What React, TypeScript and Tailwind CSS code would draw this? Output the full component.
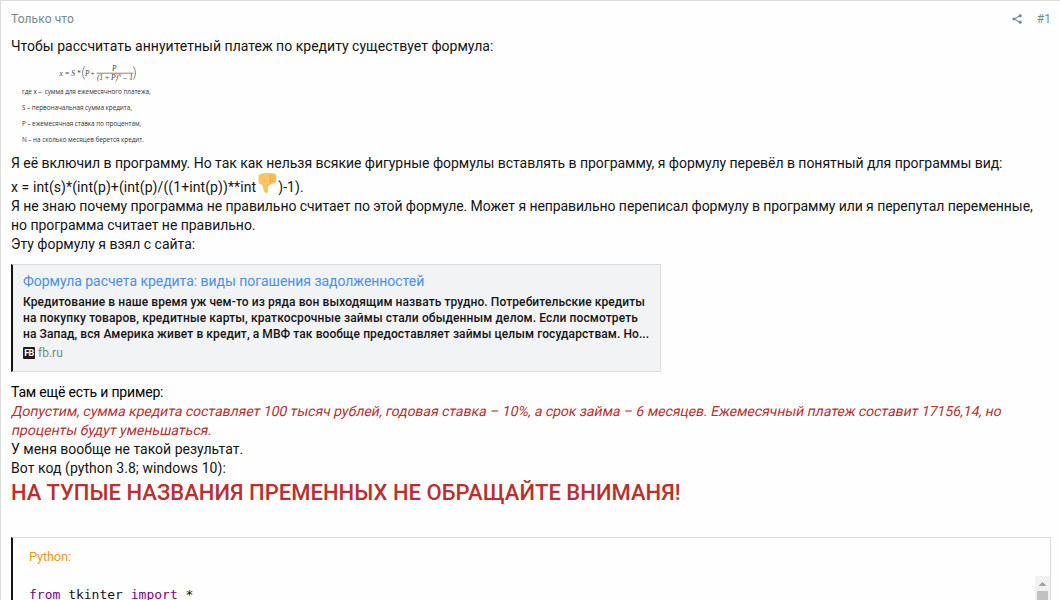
const formulaNotes = [
    "где x –  сумма для ежемесячного платежа,",
    "S – первоначальная сумма кредита,",
    "P – ежемесячная ставка по процентам,",
    "N – на сколько месяцев берется кредит.",
];

function ShareIcon() {
    return (
        <svg width="10" height="10" viewBox="0 0 10 10" fill="#74898b" stroke="#74898b" className="-mt-px mr-px">
            <path d="M8 1.7 2 5l6 3.3" fill="none" strokeWidth="1.1" />
            <circle cx="8.2" cy="1.8" r="1.2" strokeWidth="0.7" />
            <circle cx="1.7" cy="5" r="1.1" strokeWidth="0.7" />
            <circle cx="8.2" cy="8.2" r="1.2" strokeWidth="0.7" />
        </svg>
    );
}

function ThumbsDown() {
    return (
        <svg width="22" height="22" viewBox="0 0 22 22" className="inline-block align-[-2px]">
            <path
                d="M2.6 3.6 4.5 1.7 9.8 1l5.6.3 3.4.2q1.8.6 1.1 2.4 1.1 1 .2 2.6.8 1.2-.2 2.5.2 1.8-1.5 2.2l-3.8 1q-.9 1.6-2.5 2-.5 1.8.1 4.2.1 2.8-2.1 2.6-2-.1-2.5-2.9Q7 14.2 5.6 12.8l-2.4-1Q2.2 7.6 2.6 3.6Z"
                fill="#fac463"
            />
            <path d="m14.8 3.9 4.7.3M14.7 6.7l5 .1M14.5 9.4l4.7-.1M14.4 2v8.7l-2.2 3" fill="none" stroke="#e8a443" strokeWidth="0.7" />
        </svg>
    );
}

function Formula() {
    return (
        <div className="h-[98px] w-[155px] pt-[7px] pl-[11px] text-[#333]">
            <svg width="130" height="21" viewBox="0 0 130 21" fill="#444" className="block font-['Liberation_Serif',serif] text-[7.5px] italic">
                <text x="37.5" y="12.5" textLength="21">x = S *</text>
                <path d="M62.5 3.5q-4 6.5 0 13M111.5 3.5q4 6.5 0 13M74.5 10.2h37" fill="none" stroke="#555" strokeWidth="0.7" />
                <text x="63" y="12.5" textLength="10">P +</text>
                <text x="90" y="8">P</text>
                <text x="75" y="17.2" textLength="21">(1 + P)</text>
                <text x="96" y="14" className="text-[5px]">N</text>
                <text x="101" y="17.2" textLength="10">– 1</text>
            </svg>
            <div className="font-['Open_Sans',sans-serif] text-[6.4px] leading-4 tracking-[-0.06px] whitespace-pre">
                {formulaNotes.map((note) => (
                    <p key={note}>{note}</p>
                ))}
            </div>
        </div>
    );
}

function LinkPreview() {
    return (
        <div className="mt-[10px] h-[108px] w-[650px] border border-l-2 border-[#dcdcdc] border-l-[#141414] bg-[#f2f3f5] px-[10px] pt-[7px]">
            <a className="block text-[14px] leading-[19px] tracking-[-0.04px] text-[#4a90e2]">Формула расчета кредита: виды погашения задолженностей</a>
            <div className="mt-[3px] text-[12px] leading-4 font-medium tracking-[0.095px] whitespace-nowrap">
                Кредитование в наше время уж чем-то из ряда вон выходящим назвать трудно. Потребительские кредиты
                <br />
                <span className="tracking-[0.125px]">на покупку товаров, кредитные карты, краткосрочные займы стали обыденным делом. Если посмотреть</span>
                <br />
                <span className="tracking-[0.088px]">на Запад, вся Америка живет в кредит, а МВФ так вообще предоставляет займы целым государствам. Но...</span>
            </div>
            <div className="mt-[3px] flex items-center gap-[3px] text-[12px] leading-4 text-[#74898b]">
                <span className="flex h-3 w-3 items-center justify-center rounded-[1px] bg-[#221c20] text-[9px] font-bold tracking-[-0.5px] text-white">FB</span>
                fb.ru
            </div>
        </div>
    );
}

function CodeBlock() {
    return (
        <div className="mt-[29px] h-[200px] border border-l-2 border-[#dcdcdc] border-l-[#141414] bg-[#fefefe]">
            <div className="h-[38px] pt-[10px] pl-4 text-[13px] leading-[18px] tracking-[-0.25px] text-[#e59c18]">Python:</div>
            <div className="flex justify-between">
                <pre className="pt-[10px] pl-4 font-['DejaVu_Sans_Mono',monospace] text-[13px] leading-[18px]">
                    <span className="text-[#770088]">from</span> tkinter <span className="text-[#770088]">import</span> *
                </pre>
                <div className="flex h-[160px] w-[15px] flex-col items-center bg-[#f1f1f1]">
                    <svg width="15" height="15" viewBox="0 0 15 15" className="shrink-0">
                        <path d="M3.5 10 7.5 6l4 4Z" fill="#a0a0a0" />
                    </svg>
                    <div className="h-16 w-[11px] bg-[#c1c1c1]" />
                </div>
            </div>
        </div>
    );
}

export default function App() {
    return (
        <article className="h-[600px] w-[1060px] overflow-hidden border-t border-l border-[#dcdcdc] bg-[#fefefe] pr-[9px] pl-[10px] font-['Roboto',sans-serif] text-[14px] leading-[19px] text-[#141414]">
            <header className="flex h-9 items-center justify-between text-[12px] text-[#74898b]">
                <span className="tracking-[0.1px]">Только что</span>
                <div className="flex items-center gap-[14px]">
                    <ShareIcon />
                    <span>#1</span>
                </div>
            </header>
            <div className="whitespace-nowrap">
                <p className="tracking-[0.015px]">Чтобы рассчитать аннуитетный платеж по кредиту существует формула:</p>
                <Formula />
                <p className="tracking-[-0.036px]">Я её включил в программу. Но так как нельзя всякие фигурные формулы вставлять в программу, я формулу перевёл в понятный для программы вид:</p>
                <p className="-mt-px h-[25px] tracking-[0.09px]">
                    x = int(s)*(int(p)+(int(p)/((1+int(p))**int
                    <ThumbsDown />
                    )-1).
                </p>
                <p className="tracking-[-0.073px]">
                    Я не знаю почему программа не правильно считает по этой формуле. Может я неправильно переписал формулу в программу или я перепутал переменные,
                    <br />
                    <span className="tracking-[-0.03px]">но программа считает не правильно.</span>
                </p>
                <p>Эту формулу я взял с сайта:</p>
                <LinkPreview />
                <p className="mt-[11px] tracking-[-0.18px] text-black">Там ещё есть и пример:</p>
                <div className="pl-px text-[#b8312f]">
                    <p className="-skew-x-12 tracking-[-0.033px]">
                        Допустим, сумма кредита составляет 100 тысяч рублей, годовая ставка – 10%, а срок займа – 6 месяцев. Ежемесячный платеж составит 17156,14, но
                    </p>
                    <p className="-skew-x-12">проценты будут уменьшаться.</p>
                </div>
                <p>У меня вообще не такой результат.</p>
                <p className="tracking-[0.06px]">Вот код (python 3.8; windows 10):</p>
                <p className="text-[22px] leading-[30px] font-medium tracking-[0.03px] text-[#b8312f]">НА ТУПЫЕ НАЗВАНИЯ ПРЕМЕННЫХ НЕ ОБРАЩАЙТЕ ВНИМАНЯ!</p>
            </div>
            <CodeBlock />
        </article>
    );
}
